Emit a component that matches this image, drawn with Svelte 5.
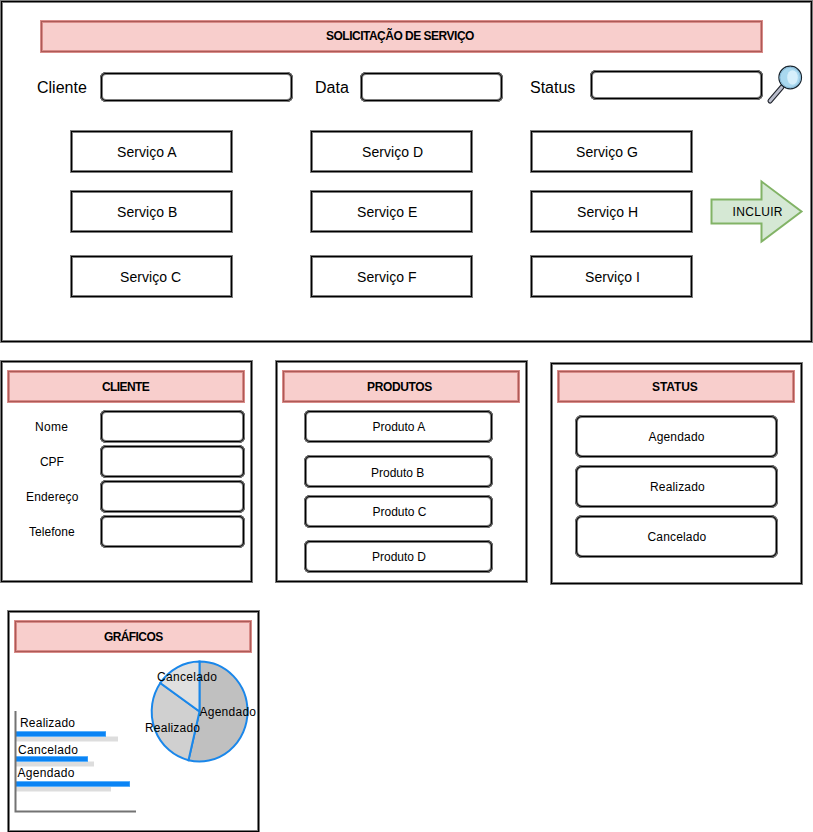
<script>
  const services = [
    [{ t: 'Serviço A', x: 47 }, { t: 'Serviço D', x: 52 }, { t: 'Serviço G', x: 46 }],
    [{ t: 'Serviço B', x: 47 }, { t: 'Serviço E', x: 47 }, { t: 'Serviço H', x: 47 }],
    [{ t: 'Serviço C', x: 50 }, { t: 'Serviço F', x: 47 }, { t: 'Serviço I', x: 55 }]
  ];
  const fields = [
    { t: 'Nome', x: 35, s: 0.3 },
    { t: 'CPF', x: 40, s: -0.1 },
    { t: 'Endereço', x: 26, s: 0.15 },
    { t: 'Telefone', x: 29, s: 0.05 }
  ];
  const products = [
    { t: 'Produto A', x: 68.5 },
    { t: 'Produto B', x: 67 },
    { t: 'Produto C', x: 68.5 },
    { t: 'Produto D', x: 68 }
  ];
  const statuses = [
    { t: 'Agendado', x: 73.5 },
    { t: 'Realizado', x: 75 },
    { t: 'Cancelado', x: 72.5 }
  ];
  const bars = [
    { t: 'Realizado', x: 20, w: 55, base: 727, y: 731, v: 90, p: 102 },
    { t: 'Cancelado', x: 18, w: 60, base: 754, y: 756, v: 72, p: 78 },
    { t: 'Agendado', x: 17.5, w: 57, base: 777, y: 781, v: 114, p: 95 }
  ];
</script>

<div class="page">
  <section class="frame request">
    <h1 class="banner"><span style:padding-left="286px" style:letter-spacing="-0.5px">SOLICITAÇÃO DE SERVIÇO</span></h1>
    <div class="filters">
      <span class="l1">Cliente</span>
      <div class="box i1"></div>
      <span class="l2">Data</span>
      <div class="box i2"></div>
      <span class="l3">Status</span>
      <div class="box i3"></div>
      <svg class="lens" width="38" height="40" viewBox="766 65 38 40">
        <path d="M770 101L782 87" stroke="#20242c" stroke-width="5" stroke-linecap="round" />
        <path d="M770 101L782 87" stroke="#b9bccb" stroke-width="2.8" stroke-linecap="round" />
        <circle cx="790.2" cy="77.5" r="11.3" fill="#a9d8ef" stroke="#18242e" stroke-width="1.2" />
        <circle cx="790.2" cy="77.5" r="10.2" fill="none" stroke="#86b8d6" stroke-width="1" />
        <ellipse cx="792.5" cy="77.5" rx="5.3" ry="7.3" fill="#d6effb" />
      </svg>
    </div>
    <div class="body">
      <div class="services">
        {#each services as row}
          <div class="row">
            {#each row as s}
              <div class="frame service" style:padding-left="{s.x}px">{s.t}</div>
            {/each}
          </div>
        {/each}
      </div>
      <svg class="arrow" width="95" height="65" viewBox="709 179 95 65">
        <path d="M711.5 199.5H761.5V181.5L801.5 211.5L761.5 241.5V223.5H711.5Z" fill="#d5e8d4" stroke="#82b366" stroke-width="2" />
        <text x="732.5" y="216" textLength="50">INCLUIR</text>
      </svg>
    </div>
  </section>

  <div class="cards">
    <section class="frame card">
      <h2 class="banner"><span style:padding-left="95px" style:letter-spacing="-0.6px">CLIENTE</span></h2>
      <div class="fields">
        {#each fields as f}
          <div class="field">
            <span class="name" style:padding-left="{f.x}px" style:letter-spacing="{f.s}px">{f.t}</span>
            <div class="box"></div>
          </div>
        {/each}
      </div>
    </section>

    <section class="frame card">
      <h2 class="banner"><span style:padding-left="85px" style:letter-spacing="-0.35px">PRODUTOS</span></h2>
      <div class="products">
        {#each products as p}
          <div class="box product" style:padding-left="{p.x}px">{p.t}</div>
        {/each}
      </div>
    </section>

    <section class="frame card status">
      <h2 class="banner"><span style:padding-left="95px" style:letter-spacing="-0.1px">STATUS</span></h2>
      <div class="statuses">
        {#each statuses as s}
          <div class="box state" style:padding-left="{s.x}px">{s.t}</div>
        {/each}
      </div>
    </section>
  </div>

  <section class="frame card charts">
    <h2 class="banner"><span style:padding-left="90px" style:letter-spacing="-0.6px">GRÁFICOS</span></h2>
    <svg class="plot" width="253" height="177" viewBox="7 653 253 177">
      {#each bars as b}
        <rect x="16" y={b.y + 5.5} width={b.p} height="5" fill="#dddddd" />
        <rect x="16" y={b.y} width={b.v} height="6" fill="#5cb0fa" />
        <rect x="16" y={b.y + 1} width={b.v - 0.5} height="4" fill="#0a84f5" />
        <text x={b.x} y={b.base} textLength={b.w}>{b.t}</text>
      {/each}
      <path d="M15.5 711V811.5H136" fill="none" stroke="#737373" stroke-width="2" />
      <g stroke="#1a87ea" stroke-width="2">
        <path d="M199.5 711.5V661.5A48 50 0 0 1 247.5 711.5A48 50 0 0 1 188.5 760.2Z" fill="#c0c0c0" />
        <path d="M199.5 711.5L188.5 760.2A48 50 0 0 1 160.3 683Z" fill="#d0d0d0" />
        <path d="M199.5 711.5L160.3 683A48 50 0 0 1 199.5 661.5Z" fill="#e0e0e0" />
      </g>
      <text x="157" y="681" textLength="60">Cancelado</text>
      <text x="199.5" y="716" textLength="56.5">Agendado</text>
      <text x="145" y="732" textLength="55">Realizado</text>
    </svg>
  </section>
</div>

<style>
  :global(body) { margin: 0; background: #fff; overflow: hidden; }
  .page {
    width: 813px;
    height: 832px;
    overflow: hidden;
    font: 12px/16px "Liberation Sans", Arial, sans-serif;
    color: #000;
  }
  .page * { box-sizing: border-box; }
  .frame, .box {
    background: #fff;
    box-shadow: inset 0 0 0 1px #7d7d7d, inset 0 0 0 2px #000, inset 0 0 0 3px #7d7d7d;
  }
  .box { border-radius: 6px; }
  .banner {
    display: flex;
    align-items: center;
    height: 33px;
    margin: 0;
    padding-bottom: 2px;
    background: #f8cecc;
    box-shadow: inset 0 0 0 1px #d98c89, inset 0 0 0 2px #ad5a57, inset 0 0 0 3px #d98c89;
    font-size: 12px;
    line-height: 16px;
    font-weight: bold;
    white-space: nowrap;
  }
  text { font: 12px "Liberation Sans", Arial, sans-serif; fill: #000; }
  svg { display: block; }

  .request { width: 813px; height: 343px; padding-top: 20px; }
  .request .banner { width: 723px; margin-left: 40px; }
  .filters {
    display: flex;
    align-items: flex-start;
    height: 77px;
    padding: 12px 0 0 36px;
    font-size: 16px;
    line-height: 20px;
  }
  .filters span { padding-top: 13px; }
  .filters .box { height: 30px; margin-top: 7px; }
  .filters .l1 { width: 64px; padding-left: 1px; }
  .i1 { width: 193px; }
  .filters .l2 { width: 67px; padding-left: 22px; }
  .i2 { width: 143px; }
  .filters .l3 { width: 87px; padding-left: 27px; }
  .filters .i3 { width: 173px; margin-top: 5px; }
  .lens { margin-left: 3px; }
  .body { display: flex; align-items: flex-start; padding-left: 70px; }
  .services { display: flex; flex-direction: column; gap: 17px; }
  .row { display: flex; gap: 77px; }
  .row:last-child { margin-top: 5px; }
  .row .service:last-child { margin-left: -20px; }
  .service {
    display: flex;
    align-items: center;
    width: 163px;
    height: 43px;
    font-size: 14px;
    line-height: 16px;
    letter-spacing: 0.05px;
    white-space: nowrap;
  }
  .arrow { margin: 49px 0 0 16px; }

  .cards { display: flex; gap: 22px; padding-top: 17px; }
  .card { width: 253px; height: 223px; padding-top: 10px; }
  .card .banner { width: 238px; margin-left: 7px; padding-bottom: 0; }
  .status { margin-top: 2px; padding-top: 8px; }
  .fields { display: flex; flex-direction: column; gap: 2px; padding-top: 7px; }
  .field { display: flex; align-items: center; height: 33px; }
  .field .name { width: 100px; white-space: nowrap; }
  .field .box { width: 145px; height: 33px; }
  .products { display: flex; flex-direction: column; gap: 12px; padding: 7px 0 0 29px; }
  .product { display: flex; align-items: center; width: 189px; height: 33px; }
  .product:nth-child(2) { padding-top: 2px; }
  .product:nth-child(3) { margin-top: -5px; }
  .statuses { display: flex; flex-direction: column; gap: 7px; padding: 12px 0 0 25px; }
  .state { display: flex; align-items: center; width: 203px; height: 43px; letter-spacing: 0.17px; }
  .state { border-radius: 7px; }
  .charts { margin: 25px 0 0 7px; }
</style>
